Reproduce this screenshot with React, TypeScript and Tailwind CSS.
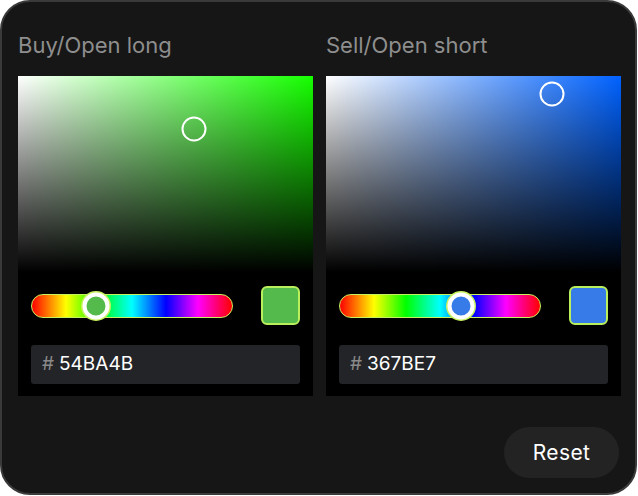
import type { CSSProperties } from "react";

type Picker = {
  label: string;
  hex: string;
  hue: number;
  sat: number;
  val: number;
};

const pickers: Picker[] = [
  { label: "Buy/Open long", hex: "54BA4B", hue: 115, sat: 0.597, val: 0.73 },
  { label: "Sell/Open short", hex: "367BE7", hue: 217, sat: 0.766, val: 0.906 },
];

const HUE_GRADIENT =
  "linear-gradient(to right, #ff0000 0%, #ffff00 17%, #00ff00 33%, #00ffff 50%, #0000ff 67%, #ff00ff 83%, #ff0000 100%)";

function ColorPicker({ p }: { p: Picker }) {
  const satStyle: CSSProperties = {
    background: `linear-gradient(to top, #000, rgba(0,0,0,0)), linear-gradient(to right, #fff, hsl(${p.hue} 100% 50%))`,
  };

  return (
    <div className="flex flex-col">
      <div className="h-[74px] pt-[31px] text-[22px] leading-[24px] text-[#8e8e8e]">{p.label}</div>
      <div className="w-[295px] bg-black">
        <div className="relative h-[196px]" style={satStyle}>
          <div
            className="absolute h-[25px] w-[25px] -translate-x-1/2 -translate-y-1/2 rounded-full border-[2.5px] border-white"
            style={{ left: `${p.sat * 100}%`, top: `${(1 - p.val) * 100}%` }}
          />
        </div>
        <div className="flex flex-col gap-[20px] px-[13px] pb-[12px] pt-[14px]">
          <div className="flex items-center justify-between">
            <div
              className="relative h-[24px] w-[202px] rounded-full border-[1.5px] border-[#c6f25e]"
              style={{ background: HUE_GRADIENT }}
            >
              <div
                className="absolute top-1/2 h-[27px] w-[27px] -translate-x-1/2 -translate-y-1/2 rounded-full border-[4px] border-white shadow-[0_0_0_1.5px_#c6f25e]"
                style={{ left: `${(p.hue / 360) * 100}%`, background: `#${p.hex}` }}
              />
            </div>
            <div
              className="h-[39px] w-[39px] rounded-[6px] border-2 border-[#b9ef5c]"
              style={{ background: `#${p.hex}` }}
            />
          </div>
          <div className="flex h-[39px] items-center gap-[5px] rounded-[3px] bg-[#232427] px-[11px] text-[19px]">
            <span className="text-[#8a8a8a]">#</span>
            <span className="text-white">{p.hex}</span>
          </div>
        </div>
      </div>
    </div>
  );
}

export default function App() {
  return (
    <div className="h-[496px] w-[638px] bg-white" style={{ fontFamily: "Inter, 'Noto Sans', sans-serif" }}>
      <div className="flex h-[495px] w-[637px] flex-col rounded-[30px] border-2 border-[#3a3a3a] bg-[#161616] px-[16px]">
        <div className="flex gap-[13px]">
          {pickers.map((p) => (
            <ColorPicker key={p.hex} p={p} />
          ))}
        </div>
        <div className="flex flex-1 items-start justify-end pt-[31px]">
          <button className="h-[51px] w-[115px] rounded-full bg-[#232323] text-[21px] tracking-[0.4px] text-white">
            Reset
          </button>
        </div>
      </div>
    </div>
  );
}
